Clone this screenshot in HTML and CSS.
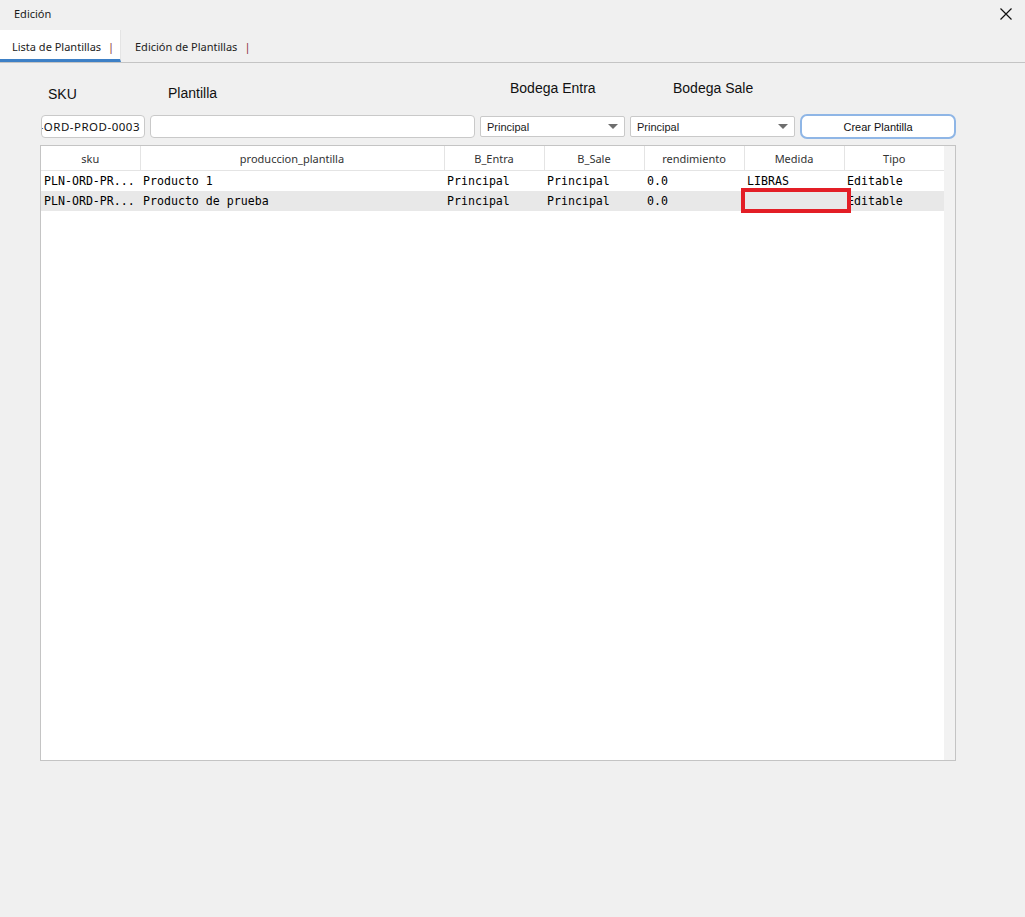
FILE: index.html
```html
<!DOCTYPE html>
<html lang="es">

<head>
  <meta charset="UTF-8" />
  <meta name="viewport" content="width=device-width, initial-scale=1.0" />
  <title>Edición</title>
  <link rel="stylesheet" href="styles.css">
</head>

<body>
  <header class="titlebar">
    <span class="title">Edición</span>
    <button class="close" title="Cerrar">
      <svg width="12" height="12" viewBox="0 0 12 12">
        <path d="M0.5 0.5 L11.5 11.5 M11.5 0.5 L0.5 11.5" stroke="#111" stroke-width="1.2" fill="none" />
      </svg>
    </button>
  </header>

  <nav class="tabs">
    <div class="tab active">Lista de Plantillas <span class="bar">|</span></div>
    <div class="tab">Edición de Plantillas <span class="bar">|</span></div>
  </nav>

  <section class="form">
    <label class="lbl lbl-sku">SKU</label>
    <label class="lbl lbl-plantilla">Plantilla</label>
    <label class="lbl lbl-entra">Bodega Entra</label>
    <label class="lbl lbl-sale">Bodega Sale</label>
    <span></span>

    <input type="text" class="field sku-field" value="PLN-ORD-PROD-0003" />
    <input type="text" class="field" />
    <div class="select">Principal <span class="arrow"></span></div>
    <div class="select">Principal <span class="arrow"></span></div>
    <button class="btn">Crear Plantilla</button>
  </section>

  <section class="grid">
    <div class="grid-body">
      <table>
        <colgroup>
          <col class="c-sku" />
          <col class="c-prod" />
          <col class="c-std" />
          <col class="c-std" />
          <col class="c-std" />
          <col class="c-std" />
          <col class="c-std" />
        </colgroup>
        <thead>
          <tr>
            <th>sku</th>
            <th>produccion_plantilla</th>
            <th>B_Entra</th>
            <th>B_Sale</th>
            <th>rendimiento</th>
            <th>Medida</th>
            <th>Tipo</th>
          </tr>
        </thead>
        <tbody>
          <tr>
            <td>PLN-ORD-PR...</td>
            <td>Producto 1</td>
            <td>Principal</td>
            <td>Principal</td>
            <td>0.0</td>
            <td>LIBRAS</td>
            <td>Editable</td>
          </tr>
          <tr class="selected">
            <td>PLN-ORD-PR...</td>
            <td>Producto de prueba</td>
            <td>Principal</td>
            <td>Principal</td>
            <td>0.0</td>
            <td class="editing"><span class="edit-box"></span></td>
            <td>Editable</td>
          </tr>
        </tbody>
      </table>
    </div>
    <div class="scrollbar"></div>
  </section>
</body>

</html>
```

FILE: styles.css
```css
:root {
  --bg: #f0f0f0;
  --white: #ffffff;
  --text: #1a1a1a;
  --line: #c4c4c4;
  --line-light: #e4e4e4;
  --blue: #3d80c6;
  --glow: #8fb6e6;
  --red: #e31e26;
  --row: #e8e8e8;
  --ui-font: "Noto Sans", "DejaVu Sans", sans-serif;
  --form-font: "Liberation Sans", Arial, sans-serif;
  --mono-font: "DejaVu Sans Mono", "Liberation Mono", monospace;
}

body {
  margin: 0;
  background: var(--bg);
  color: var(--text);
  font-family: var(--ui-font);
  width: 1025px;
  height: 917px;
  overflow: hidden;
}

/* barra de título */
.titlebar {
  height: 30px;
  display: flex;
  align-items: center;
  justify-content: space-between;
  padding: 0 14px;
  box-sizing: border-box;
}

.title {
  font-size: 11px;
  margin-top: -3px;
}

.close {
  border: none;
  background: transparent;
  padding: 0;
  margin: -2px -1px 0 0;
  display: flex;
  cursor: pointer;
}

/* pestañas */
.tabs {
  display: flex;
  height: 32px;
  border-bottom: 1px solid var(--line);
}

.tab {
  font-size: 11px;
  padding: 0 12px;
  display: flex;
  align-items: center;
  white-space: nowrap;
  box-sizing: border-box;
  color: #222;
}

.tab.active {
  background: var(--white);
  border-right: 1px solid var(--line-light);
  border-bottom: 3px solid var(--blue);
  padding: 3px 0 0 12px;
  width: 121px;
}

.tab + .tab {
  padding-left: 14px;
}

.bar {
  color: #8a2a3a;
  margin-left: 7px;
}

/* formulario */
.form {
  display: grid;
  grid-template-columns: 104px 325px 145px 165px 156px;
  column-gap: 5px;
  margin: 0 0 0 41px;
  padding-top: 14px;
  font-family: var(--form-font);
}

.lbl {
  font-size: 14px;
  height: 37px;
  box-sizing: border-box;
  color: #111;
}

.lbl-sku {
  padding: 9px 0 0 7px;
}

.lbl-plantilla {
  padding: 8px 0 0 18px;
}

.lbl-entra {
  padding: 3px 0 0 30px;
}

.lbl-sale {
  padding: 3px 0 0 43px;
}

.field {
  height: 23px;
  box-sizing: border-box;
  border: 1px solid #c9c9c9;
  border-radius: 4px;
  background: var(--white);
  font-family: var(--ui-font);
  font-size: 11.5px;
  letter-spacing: 0.5px;
  color: #111;
  padding: 0 4px;
  margin-top: 1px;
}

.sku-field {
  direction: rtl;
  text-align: left;
  padding: 0 4px 0 0;
}

.select {
  height: 21px;
  box-sizing: border-box;
  margin-top: 2px;
  border: 1px solid #c9c9c9;
  border-radius: 2px;
  background: var(--white);
  font-size: 11px;
  display: flex;
  align-items: center;
  justify-content: space-between;
  padding: 0 6px 0 6px;
}

.arrow {
  width: 0;
  height: 0;
  border-left: 5px solid transparent;
  border-right: 5px solid transparent;
  border-top: 5px solid #6e6e6e;
}

.btn {
  height: 25px;
  box-sizing: border-box;
  border: 2px solid var(--glow);
  border-radius: 7px;
  background: var(--white);
  font-family: var(--form-font);
  font-size: 11px;
  color: #111;
  cursor: pointer;
}

/* tabla */
.grid {
  display: flex;
  margin: 6px 0 0 40px;
  width: 916px;
  height: 616px;
  box-sizing: border-box;
  border: 1px solid var(--line);
  background: var(--white);
}

.grid-body {
  flex: 1;
}

.scrollbar {
  width: 11px;
  background: #f2f2f2;
}

table {
  border-collapse: collapse;
  table-layout: fixed;
  width: 903px;
}

.c-sku {
  width: 99px;
}

.c-prod {
  width: 304px;
}

.c-std {
  width: 100px;
}

th {
  height: 24px;
  font-weight: normal;
  font-size: 11px;
  color: #333;
  border-right: 1px solid var(--line-light);
  border-bottom: 1px solid var(--line-light);
  padding: 0;
}

th:last-child {
  border-right: none;
}

td {
  height: 20px;
  padding: 0 0 0 3px;
  font-family: var(--mono-font);
  font-size: 11.6px;
  color: #000;
  white-space: nowrap;
  overflow: hidden;
}

tr.selected td {
  background: var(--row);
}

td.editing {
  position: relative;
  overflow: visible;
}

.edit-box {
  position: absolute;
  left: -3px;
  top: -3px;
  width: 110px;
  height: 25px;
  box-sizing: border-box;
  border: 4px solid var(--red);
}
```
